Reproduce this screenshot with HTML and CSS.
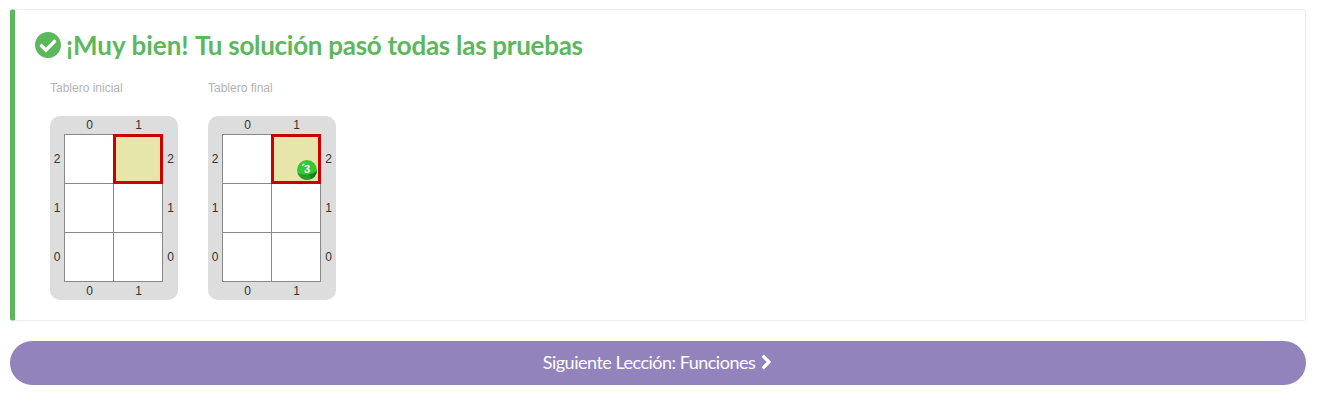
FILE: index.html
```html
<!DOCTYPE html>
<html lang="es">
<head>
<meta charset="utf-8">
<title>Resultado</title>
<link rel="stylesheet" href="styles.css">
</head>
<body>
<section class="callout">
  <h4 class="callout-title">
    <svg class="check" viewBox="8 8 496 496"><path fill="currentColor" d="M504 256c0 136.967-111.033 248-248 248S8 392.967 8 256 119.033 8 256 8s248 111.033 248 248zM227.314 387.314l184-184c6.248-6.248 6.248-16.379 0-22.627l-22.627-22.627c-6.248-6.249-16.379-6.249-22.628 0L216 308.118l-70.059-70.059c-6.248-6.248-16.379-6.248-22.628 0l-22.627 22.627c-6.248 6.248-6.248 16.379 0 22.627l104 104c6.249 6.249 16.379 6.249 22.628.001z"/></svg>
    <span class="title-text"><span class="cheer">¡Muy bien! </span>Tu solución pasó todas las pruebas</span>
  </h4>
  <div class="boards">
    <figure class="board-box">
      <figcaption class="caption">Tablero inicial</figcaption>
      <div class="board">
        <div class="cols top"><span>0</span><span>1</span></div>
        <div class="rows left"><span>2</span><span>1</span><span>0</span></div>
        <div class="cells">
          <div class="cell"></div><div class="cell head"></div>
          <div class="cell"></div><div class="cell"></div>
          <div class="cell"></div><div class="cell"></div>
        </div>
        <div class="rows right"><span>2</span><span>1</span><span>0</span></div>
        <div class="cols bottom"><span>0</span><span>1</span></div>
      </div>
    </figure>
    <figure class="board-box">
      <figcaption class="caption">Tablero final</figcaption>
      <div class="board">
        <div class="cols top"><span>0</span><span>1</span></div>
        <div class="rows left"><span>2</span><span>1</span><span>0</span></div>
        <div class="cells">
          <div class="cell"></div>
          <div class="cell head">
            <div class="ball">
              <svg class="ball-art" viewBox="0 0 20 20"><circle cx="10" cy="10" r="10" fill="#35c835"/><path d="M0.500 13Q6 15.500 12 14Q17 13 20 10A10 10 0 0 1 0.500 13Z" fill="#2a9c2a"/><path d="M12 14.500Q17 14 19.800 11.500A10 10 0 0 1 14.500 18.900Q14 16 12 14.500Z" fill="#1c7c1c"/><path d="M4.500 5.500L6.500 3.500L8 4L5.800 6.300Z" fill="#e4f8e4"/></svg>
              <span class="ball-count">3</span>
            </div>
          </div>
          <div class="cell"></div><div class="cell"></div>
          <div class="cell"></div><div class="cell"></div>
        </div>
        <div class="rows right"><span>2</span><span>1</span><span>0</span></div>
        <div class="cols bottom"><span>0</span><span>1</span></div>
      </div>
    </figure>
  </div>
</section>
<a class="next">
  <span class="next-text">Siguiente Lección: Funciones</span>
  <svg class="chevron" viewBox="0 0 10 16"><path d="M1.700 1.700L8 8L1.700 14.300" fill="none" stroke="currentColor" stroke-width="3.200"/></svg>
</a>
</body>
</html>
```
FILE: styles.css
```css
* { box-sizing: border-box; }
body {
  margin: 0;
  padding: 9px 20px 0 10px;
  background: #fff;
  font-family: Lato, sans-serif;
}
.callout {
  height: 312px;
  padding: 20px;
  border: 1px solid #eee;
  border-left: 5px solid #5cb85c;
  border-radius: 3px;
}
.callout-title {
  display: flex;
  align-items: center;
  gap: 5px;
  height: 31px;
  margin: 0;
  color: #5cb85c;
  font-size: 26px;
  font-weight: 700;
  line-height: 31px;
  letter-spacing: -0.28px;
  white-space: nowrap;
}
.cheer { letter-spacing: 0; }
.check {
  width: 26px;
  height: 26px;
  margin-top: -1px;
}
.boards {
  display: flex;
  gap: 30px;
  padding: 19px 15px 0;
  font-family: "Liberation Sans", Arial, sans-serif;
  font-size: 12px;
}
.board-box { margin: 0; width: 128px; }
.caption {
  height: 36px;
  color: #b3b3b3;
  line-height: 16px;
}
.board {
  display: grid;
  grid-template-columns: 14px 99px 15px;
  grid-template-rows: 18px 148px 18px;
  background: #ddd;
  border-radius: 10px;
  color: #333;
}
.cols {
  grid-column: 2;
  display: grid;
  grid-template-columns: 49px 49px;
  padding-left: 1px;
  line-height: 18px;
  text-align: center;
}
.rows {
  display: grid;
  grid-template-rows: repeat(3, 49px);
  line-height: 50px;
  text-align: center;
}
.left { grid-area: 2 / 1; }
.right { grid-area: 2 / 3; }
.cells {
  grid-area: 2 / 2;
  display: grid;
  grid-template-columns: 48px 48px;
  grid-template-rows: repeat(3, 48px);
  gap: 1px;
  padding: 1px;
  background: #888;
}
.cell { background: #fff; }
.head {
  display: flex;
  align-items: flex-end;
  justify-content: flex-end;
  margin: -1px;
  padding: 0 1px 1px 0;
  border: 3px solid #c00;
  background: #e6e6aa;
}
.ball {
  display: grid;
  width: 20px;
  height: 20px;
}
.ball-art, .ball-count { grid-area: 1 / 1; }
.ball-art { width: 20px; height: 20px; }
.ball-count {
  z-index: 1;
  color: #fff;
  font-size: 11px;
  font-weight: 700;
  line-height: 19px;
  text-align: center;
}
.next {
  display: flex;
  align-items: center;
  justify-content: center;
  gap: 6px;
  height: 44px;
  margin-top: 20px;
  padding: 0 2px 2px 0;
  border-radius: 22px;
  background: #9283bd;
  color: #fff;
  font-size: 18px;
  line-height: 24px;
  letter-spacing: -0.5px;
}
.chevron { width: 10px; height: 16px; }
```
